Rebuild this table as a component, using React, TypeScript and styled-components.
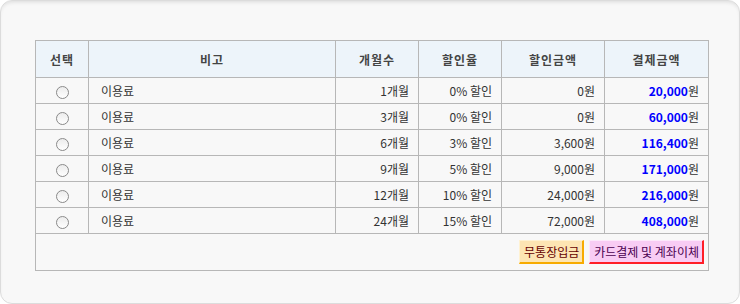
import React from 'react'
import styled, { createGlobalStyle } from 'styled-components'

const GlobalStyle = createGlobalStyle`
  html, body {
    margin: 0;
    padding: 0;
    background: #fff;
  }
  body {
    font-family: "Noto Sans CJK KR", "DejaVu Sans", sans-serif;
    font-size: 12px;
    color: #333;
  }
`

const Panel = styled('div')`
  background: #f8f8f8;
  border: 1px solid #dcdcdc;
  border-radius: 12px;
  box-shadow: inset 0 3px 4px -2px rgba(0, 0, 0, 0.12);
  box-sizing: border-box;
  height: 304px;
  padding: 39px 0 0 34px;
  width: 740px;
`

const Table = styled('table')`
  border-collapse: collapse;
  table-layout: fixed;
  width: 674px;
`

const HeadCell = styled('th')<{ w: number }>`
  background: #edf4fa;
  border: 1px solid #b7b7b7;
  color: #444;
  font-size: 12px;
  font-weight: bold;
  height: 36px;
  letter-spacing: 1px;
  padding: 0;
  text-align: center;
  width: ${(props) => props.w}px;
`

const cellPadding: Record<string, string> = {
  left: '0 0 0 12px',
  right: '0 9px 0 0',
  center: '0',
}

const Cell = styled('td')<{ align?: string }>`
  border: 1px solid #b7b7b7;
  color: #333;
  font-size: 12px;
  height: 25px;
  line-height: 14px;
  padding: ${(props) => cellPadding[props.align || 'center']};
  text-align: ${(props) => props.align || 'center'};
  white-space: nowrap;
`

const Radio = styled('span')`
  background: linear-gradient(#ececec, #ffffff);
  border: 1px solid #8a8a8a;
  border-radius: 50%;
  box-sizing: border-box;
  display: inline-block;
  height: 13px;
  margin-top: 4px;
  vertical-align: middle;
  width: 13px;
`

const Amount = styled('b')`
  color: #0000ff;
  font-weight: bold;
`

const FootCell = styled('td')`
  border: 1px solid #b7b7b7;
  height: 36px;
  padding: 0 4px 0 0;
`

const ButtonRow = styled('div')`
  align-items: center;
  display: flex;
  gap: 5px;
  justify-content: flex-end;
`

interface IPayButton {
  bg: string, edge: string, light: string, ink: string
}
const PayButton = styled('button')<IPayButton>`
  background: ${(props) => props.bg};
  border-style: solid;
  border-width: 1px 2px 2px 1px;
  border-color: ${(props) => props.light} ${(props) => props.edge} ${(props) => props.edge} ${(props) => props.light};
  color: ${(props) => props.ink};
  cursor: pointer;
  font-family: "Noto Sans CJK KR", "DejaVu Sans", sans-serif;
  font-size: 12px;
  height: 24px;
  line-height: 18px;
  padding: 0 3px 0 4px;
`

const rows = [
  { months: 1, rate: 0, discount: '0', total: '20,000' },
  { months: 3, rate: 0, discount: '0', total: '60,000' },
  { months: 6, rate: 3, discount: '3,600', total: '116,400' },
  { months: 9, rate: 5, discount: '9,000', total: '171,000' },
  { months: 12, rate: 10, discount: '24,000', total: '216,000' },
  { months: 24, rate: 15, discount: '72,000', total: '408,000' },
]

export default function App() {
  return (
    <>
      <GlobalStyle />
      <Panel>
        <Table>
          <thead>
            <tr>
              <HeadCell w={52}>선택</HeadCell>
              <HeadCell w={246}>비고</HeadCell>
              <HeadCell w={82}>개월수</HeadCell>
              <HeadCell w={82}>할인율</HeadCell>
              <HeadCell w={102}>할인금액</HeadCell>
              <HeadCell w={103}>결제금액</HeadCell>
            </tr>
          </thead>
          <tbody>
            {rows.map((r) => (
              <tr key={r.months}>
                <Cell><Radio /></Cell>
                <Cell align="left">이용료</Cell>
                <Cell align="right">{r.months}개월</Cell>
                <Cell align="right">{r.rate}% 할인</Cell>
                <Cell align="right">{r.discount}원</Cell>
                <Cell align="right"><Amount>{r.total}</Amount>원</Cell>
              </tr>
            ))}
            <tr>
              <FootCell colSpan={6}>
                <ButtonRow>
                  <PayButton bg="#fde5b3" light="#fff2d2" edge="#f7ab00" ink="#660000">무통장입금</PayButton>
                  <PayButton bg="#f8ccf4" light="#fde8fb" edge="#ff1e28" ink="#4a0050">카드결제 및 계좌이체</PayButton>
                </ButtonRow>
              </FootCell>
            </tr>
          </tbody>
        </Table>
      </Panel>
    </>
  )
}
